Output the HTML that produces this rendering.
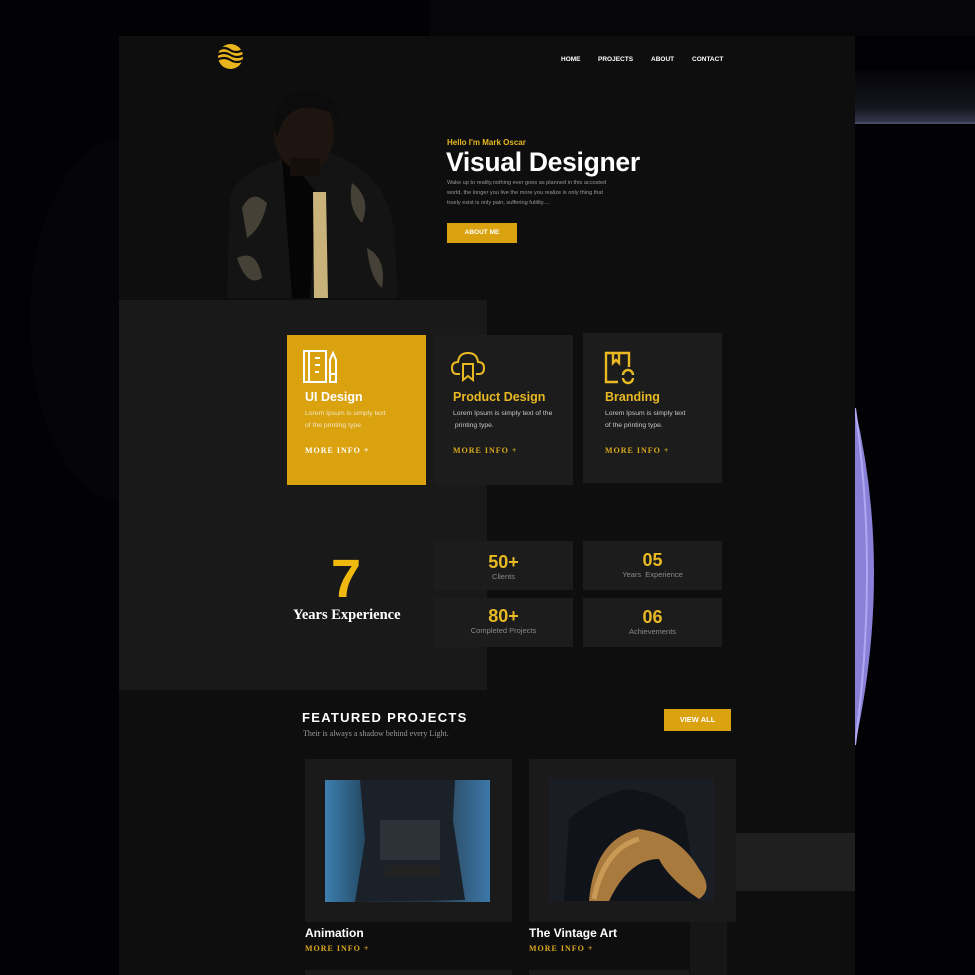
<!DOCTYPE html>
<html><head><meta charset="utf-8"><style>
*{margin:0;padding:0;box-sizing:border-box}
body{width:975px;height:975px;overflow:hidden;background:#020204;font-family:"Liberation Sans",sans-serif;position:relative}
.a{position:absolute}
.nav{font-size:6.5px;font-weight:bold;color:#fff;top:56px}
.card{background:#1c1c1c}
.ct{font-size:12.5px;font-weight:bold;color:#e8b923}
.cd{font-size:6.8px;color:#c8c8c8;line-height:12px;white-space:nowrap}
.mi{font-family:"Liberation Serif",serif;font-size:8px;letter-spacing:1px;color:#d9a81e;font-weight:bold}
.st{background:#1c1c1c;text-align:center}
.sn{font-size:18px;font-weight:bold;color:#e8b923;line-height:20px}
.sl{font-size:7.5px;color:#8a8a8a}
</style></head><body>
<div class="a" style="left:430px;top:0;width:545px;height:36px;background:#060609"></div>
<div class="a" style="left:855px;top:70px;width:120px;height:54px;background:linear-gradient(#040408,#15151f 70%,#3a3a52)"></div>
<div class="a" style="left:855px;top:122px;width:120px;height:2px;background:#4a4a68"></div>
<div class="a" style="left:30px;top:140px;width:180px;height:360px;border-radius:50%;background:#050509"></div>
<svg class="a" style="left:855px;top:400px" width="35" height="360"><path d="M0 8 Q38 170 0 345 Z" fill="#8a80d8"/><path d="M0 8 Q24 170 0 345" stroke="#b0a8f2" stroke-width="2" fill="none"/></svg>
<div class="a" style="left:119px;top:36px;width:736px;height:939px;background:#0e0e0e"></div>
<div class="a" style="left:119px;top:300px;width:368px;height:390px;background:#191919"></div>
<div class="a" style="left:735px;top:833px;width:120px;height:58px;background:#1f1f1f"></div>
<div class="a" style="left:690px;top:920px;width:37px;height:55px;background:#161616"></div>
<svg class="a" style="left:217px;top:42px" width="27" height="28" viewBox="0 0 27 28"><circle cx="13.5" cy="14.5" r="12.5" fill="#eab41c"/><path d="M1 8 Q7 4 13 8 T26 8 M0 13 Q7 9 13.5 13 T27 13 M0 18 Q7 14 13.5 18 T27 18" stroke="#0e0e0e" stroke-width="2.2" fill="none"/></svg>
<div class="a nav" style="left:561px">HOME</div>
<div class="a nav" style="left:598px">PROJECTS</div>
<div class="a nav" style="left:651px">ABOUT</div>
<div class="a nav" style="left:692px">CONTACT</div>
<svg class="a" style="left:222px;top:88px" width="180" height="212" viewBox="0 0 180 212">
<path d="M5 210 L8 110 Q15 85 50 75 L70 65 L110 65 L130 75 Q165 95 172 140 L176 210 Z" fill="#141414"/>
<path d="M20 120 Q30 100 45 115 Q40 140 25 150 Z M130 95 Q150 110 140 135 Q125 120 130 95 M15 170 Q35 160 40 190 Q25 200 15 170 M145 160 Q165 170 160 200 Q148 190 145 160" fill="#5a5444" opacity=".7"/>
<path d="M60 70 L75 80 L95 105 L88 210 L70 210 Z" fill="#050505"/>
<path d="M91 104 L104 104 L106 210 L92 210 Z" fill="#c9b37a"/>
<ellipse cx="82" cy="45" rx="30" ry="38" fill="#1e1410"/>
<path d="M52 40 Q52 3 85 3 Q115 5 118 30 Q100 18 80 20 Q60 25 55 50 Z" fill="#0c0c0c"/>
<rect x="68" y="70" width="30" height="18" fill="#150e0b"/>
</svg>
<div class="a" style="left:447px;top:138px;font-size:8px;font-weight:bold;color:#e8b923">Hello I'm Mark Oscar</div>
<div class="a" style="left:446px;top:147px;font-size:26.5px;font-weight:bold;color:#fff;letter-spacing:-.3px">Visual Designer</div>
<div class="a" style="left:447px;top:178px;font-size:5.6px;line-height:10px;color:#999;white-space:nowrap">Wake up to reality,nothing ever goes as planned in this accosted<br>world, the longer you live the more you realize is only thing that<br>truely exist is only pain, suffering futility....</div>
<div class="a" style="left:447px;top:223px;width:70px;height:20px;background:#d9a20e;color:#fff;font-size:6.5px;font-weight:bold;text-align:center;line-height:20px">ABOUT ME</div>
<div class="a" style="left:287px;top:335px;width:139px;height:150px;background:#d9a20e"></div>
<svg class="a" style="left:303px;top:350px" width="36" height="34" viewBox="0 0 36 34" fill="none" stroke="#fff" stroke-width="2"><rect x="1" y="1" width="22" height="31"/><path d="M6 1 V32 M12 8 H17 M12 15 H17 M12 22 H16"/><path d="M27 32 V10 L30 3 L33 10 V32 Z M27 24 H33"/></svg>
<div class="a ct" style="left:305px;top:390px;color:#fff">UI Design</div>
<div class="a cd" style="left:305px;top:408px;color:#f5e6c0">Lorem Ipsum is simply text<br>of the printing type.</div>
<div class="a mi" style="left:305px;top:446px;color:#fff">MORE INFO +</div>
<div class="a card" style="left:434px;top:335px;width:139px;height:150px"></div>
<svg class="a" style="left:451px;top:350px" width="34" height="32" viewBox="0 0 34 32" fill="none" stroke="#e8b923" stroke-width="2"><path d="M9 24 H6 Q1 24 1 18 Q1 12 7 12 Q8 3 17 3 Q26 3 27 12 Q33 12 33 18 Q33 24 28 24 H25"/><path d="M12 14 H22 V30 L17 26 L12 30 Z"/></svg>
<div class="a ct" style="left:453px;top:390px">Product Design</div>
<div class="a cd" style="left:453px;top:408px">Lorem Ipsum is simply text of the<br>&nbsp;printing type.</div>
<div class="a mi" style="left:453px;top:446px">MORE INFO +</div>
<div class="a card" style="left:583px;top:333px;width:139px;height:150px"></div>
<svg class="a" style="left:604px;top:351px" width="32" height="34" viewBox="0 0 32 34" fill="none" stroke="#e8b923" stroke-width="2.4"><path d="M14 31 H2 V2 H25 V16"/><path d="M9 2 V12 L12 9 L15 12 V2"/><path d="M19 24 A5 5 0 0 1 29 24 M29 27 A5 5 0 0 1 19 27"/></svg>
<div class="a ct" style="left:605px;top:390px">Branding</div>
<div class="a cd" style="left:605px;top:408px">Lorem Ipsum is simply text<br>of the printing type.</div>
<div class="a mi" style="left:605px;top:446px">MORE INFO +</div>
<div class="a" style="left:331px;top:552px;font-weight:bold;font-size:54px;color:#f0b90e;line-height:54px">7</div>
<div class="a" style="left:293px;top:607px;font-family:'Liberation Serif',serif;font-weight:bold;font-size:14.5px;color:#fff">Years Experience</div>
<div class="a st" style="left:434px;top:541px;width:139px;height:49px"><div class="sn" style="margin-top:11px">50+</div><div class="sl">Clients</div></div>
<div class="a st" style="left:583px;top:541px;width:139px;height:49px"><div class="sn" style="margin-top:9px">05</div><div class="sl">Years &nbsp;Experience</div></div>
<div class="a st" style="left:434px;top:598px;width:139px;height:49px"><div class="sn" style="margin-top:8px">80+</div><div class="sl">Completed Projects</div></div>
<div class="a st" style="left:583px;top:598px;width:139px;height:49px"><div class="sn" style="margin-top:9px">06</div><div class="sl">Achievements</div></div>
<div class="a" style="left:302px;top:710px;font-size:13px;font-weight:bold;color:#fff;letter-spacing:1.3px">FEATURED PROJECTS</div>
<div class="a" style="left:303px;top:729px;font-family:'Liberation Serif',serif;font-size:8px;color:#999">Their is always a shadow behind every Light.</div>
<div class="a" style="left:664px;top:709px;width:67px;height:22px;background:#d9a20e;color:#fff;font-size:7.5px;font-weight:bold;text-align:center;line-height:22px">VIEW ALL</div>
<div class="a card" style="left:305px;top:759px;width:207px;height:163px;background:#1a1a1a"></div>
<div class="a" style="left:325px;top:780px;width:165px;height:122px;background:linear-gradient(90deg,#3d7fb0,#1e3c52 30%,#263440 60%,#3c78a8)"></div>
<svg class="a" style="left:325px;top:780px" width="165" height="122"><path d="M35 0 L130 0 L128 40 L140 120 L30 122 L40 60 Z" fill="#1b2128"/><rect x="55" y="40" width="60" height="40" fill="#2b3238"/><rect x="60" y="85" width="55" height="12" fill="#222"/></svg>
<div class="a card" style="left:529px;top:759px;width:207px;height:163px;background:#1a1a1a"></div>
<div class="a" style="left:549px;top:779px;width:165px;height:122px;background:#1a1d24"></div>
<svg class="a" style="left:549px;top:779px" width="165" height="122"><path d="M15 122 L20 40 Q50 15 80 10 Q115 15 135 35 L150 122 Z" fill="#10131a"/><path d="M40 122 Q45 60 90 50 Q130 55 150 90 Q165 110 150 120 Q120 100 110 80 Q80 80 60 122 Z" fill="#a87a3d"/><path d="M45 120 Q55 70 90 60" stroke="#c99a55" stroke-width="5" fill="none"/></svg>
<div class="a" style="left:305px;top:926px;font-size:12px;font-weight:bold;color:#fff">Animation</div>
<div class="a mi" style="left:305px;top:944px">MORE INFO +</div>
<div class="a" style="left:529px;top:926px;font-size:12px;font-weight:bold;color:#fff">The Vintage Art</div>
<div class="a mi" style="left:529px;top:944px">MORE INFO +</div>
<div class="a" style="left:305px;top:970px;width:207px;height:5px;background:#1a1a1a"></div>
<div class="a" style="left:529px;top:970px;width:160px;height:5px;background:#1a1a1a"></div>
</body></html>
